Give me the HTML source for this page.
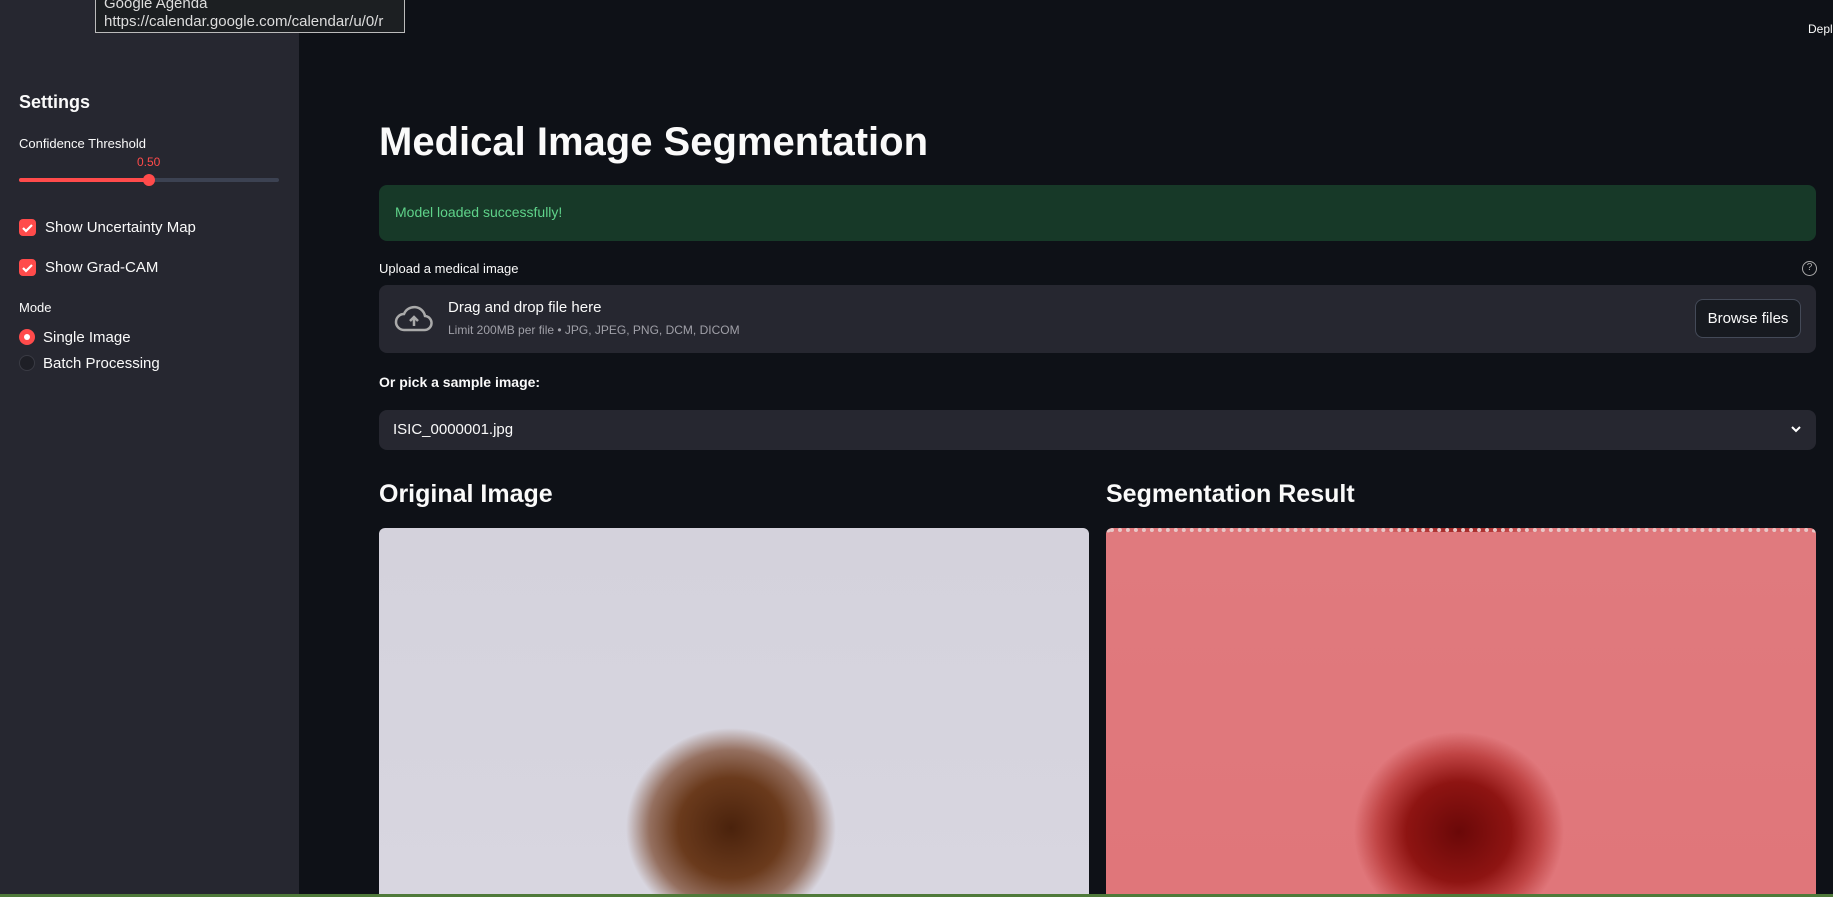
<!DOCTYPE html>
<html><head><meta charset="utf-8"><style>
*{box-sizing:border-box;margin:0;padding:0}
body{width:1833px;height:897px;overflow:hidden;background:#0e1117;font-family:"Liberation Sans","DejaVu Sans",sans-serif;color:#fafafa;position:relative}
.a{position:absolute;white-space:nowrap}
#side{position:absolute;left:0;top:0;width:299px;height:897px;background:#262730}
.cb{position:absolute;width:17px;height:17px;border-radius:4px;background:#ff4b4b}
.box{position:absolute;background:#262730;border-radius:8px}
</style></head><body>
<div id="side"></div>
<div class="a" style="left:95px;top:-6px;width:310px;height:39px;background:#1c1f22;border:1px solid #bbb;padding:0 8px;font-size:15px;color:#ddd;line-height:18px">Google Agenda<br>https://calendar.google.com/calendar/u/0/r</div>
<div class="a" style="left:19px;top:92px;font-size:18px;font-weight:bold">Settings</div>
<div class="a" style="left:19px;top:136px;font-size:13px">Confidence Threshold</div>
<div class="a" style="left:137px;top:155px;font-size:12px;color:#ff4b4b">0.50</div>
<div class="a" style="left:19px;top:178px;width:260px;height:4px;background:#3c4252;border-radius:2px"></div>
<div class="a" style="left:19px;top:178px;width:130px;height:4px;background:#ff4b4b;border-radius:2px"></div>
<div class="a" style="left:143px;top:174px;width:12px;height:12px;background:#ff4b4b;border-radius:50%"></div>
<div class="cb" style="left:19px;top:219px"></div>
<svg class="a" style="left:19px;top:219px" width="17" height="17"><path d="M4 9l3 3 6-6" stroke="#fff" stroke-width="2.2" fill="none"/></svg>
<div class="a" style="left:45px;top:219px;font-size:15px">Show Uncertainty Map</div>
<div class="cb" style="left:19px;top:259px"></div>
<svg class="a" style="left:19px;top:259px" width="17" height="17"><path d="M4 9l3 3 6-6" stroke="#fff" stroke-width="2.2" fill="none"/></svg>
<div class="a" style="left:45px;top:259px;font-size:15px">Show Grad-CAM</div>
<div class="a" style="left:19px;top:300px;font-size:13px">Mode</div>
<div class="a" style="left:19px;top:329px;width:16px;height:16px;border-radius:50%;background:#ff4b4b"></div>
<div class="a" style="left:24px;top:334px;width:6px;height:6px;border-radius:50%;background:#fff"></div>
<div class="a" style="left:43px;top:329px;font-size:15px">Single Image</div>
<div class="a" style="left:19px;top:355px;width:16px;height:16px;border-radius:50%;background:#1e1f26;border:1px solid #3a3b44"></div>
<div class="a" style="left:43px;top:355px;font-size:15px">Batch Processing</div>

<div class="a" style="left:1808px;top:22px;font-size:12px">Deploy</div>
<div class="a" style="left:379px;top:120px;font-size:40px;font-weight:bold">Medical Image Segmentation</div>
<div class="box" style="left:379px;top:185px;width:1437px;height:56px;background:#173928"></div>
<div class="a" style="left:395px;top:204px;font-size:14px;color:#5fd38a">Model loaded successfully!</div>
<div class="a" style="left:379px;top:261px;font-size:13px">Upload a medical image</div>
<div class="a" style="left:1802px;top:261px;width:15px;height:15px;border:1.5px solid #aaa;border-radius:50%;font-size:10px;line-height:12px;text-align:center;color:#aaa">?</div>
<div class="box" style="left:379px;top:285px;width:1437px;height:68px"></div>
<svg class="a" style="left:394px;top:304px" width="40" height="30" viewBox="0 0 40 30"><path d="M10 26h20a7 7 0 0 0 1-14 11 11 0 0 0-21-2 8 8 0 0 0 0 16z" fill="none" stroke="#aaa" stroke-width="2.5"/><path d="M20 22v-8M16 17l4-4 4 4" stroke="#aaa" stroke-width="2.5" fill="none"/></svg>
<div class="a" style="left:448px;top:299px;font-size:15px">Drag and drop file here</div>
<div class="a" style="left:448px;top:323px;font-size:12px;color:#a0a0a8">Limit 200MB per file • JPG, JPEG, PNG, DCM, DICOM</div>
<div class="a" style="left:1695px;top:299px;width:106px;height:39px;border:1px solid #444a58;border-radius:8px;background:#171a20;font-size:15px;line-height:37px;text-align:center">Browse files</div>
<div class="a" style="left:379px;top:374px;font-size:14px;font-weight:bold">Or pick a sample image:</div>
<div class="box" style="left:379px;top:410px;width:1437px;height:40px"></div>
<div class="a" style="left:393px;top:421px;font-size:15px">ISIC_0000001.jpg</div>
<svg class="a" style="left:1790px;top:424px" width="12" height="10"><path d="M2 3l4 4 4-4" stroke="#fff" stroke-width="2" fill="none"/></svg>
<div class="a" style="left:379px;top:480px;font-size:25px;font-weight:bold">Original Image</div>
<div class="a" style="left:1106px;top:480px;font-size:25px;font-weight:bold">Segmentation Result</div>
<div class="a" style="left:379px;top:528px;width:710px;height:369px;border-radius:6px 6px 0 0;background:radial-gradient(ellipse 105px 100px at 352px 300px,#4a220c 0%,#6a3a1c 50%,#957060 78%,rgba(200,195,205,0) 100%),linear-gradient(#d4d2dc,#d8d6e0)"></div>
<div class="a" style="left:1106px;top:528px;width:710px;height:369px;border-radius:6px 6px 0 0;background:radial-gradient(ellipse 105px 100px at 353px 300px,#6a0808 0%,#8e1412 50%,#c04444 78%,rgba(224,118,122,0) 100%),linear-gradient(#e07a7e,#e0767a);border-top:4px dotted #e8c8c8"></div>
<div class="a" style="left:0;top:894px;width:1833px;height:3px;background:#4f7a3a"></div>
</body></html>
